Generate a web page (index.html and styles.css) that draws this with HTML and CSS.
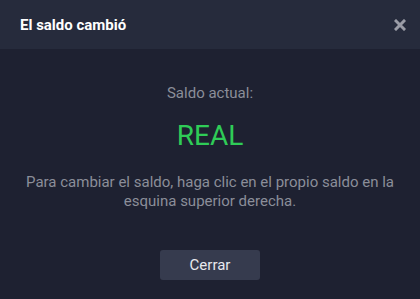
FILE: index.html
```html
<!DOCTYPE html>
<html lang="es">
<head>
<meta charset="utf-8">
<link rel="stylesheet" href="styles.css">
</head>
<body>
<div class="modal">
  <div class="header">
    <span class="title">El saldo cambió</span>
    <svg class="close" width="12" height="12" viewBox="0 0 12 12"><path d="M2 2L10 10M10 2L2 10" stroke="#9a9ca6" stroke-width="3" stroke-linecap="square"/></svg>
  </div>
  <div class="content">
    <div class="label">Saldo actual:</div>
    <div class="value">REAL</div>
    <p class="text">Para cambiar el saldo, haga clic en el propio saldo en la esquina superior derecha.</p>
    <button class="btn">Cerrar</button>
  </div>
</div>
</body>
</html>
```
FILE: styles.css
```css
html, body { margin: 0; padding: 0; }
body { width: 420px; height: 299px; background: #1e2131; font-family: Roboto, "Liberation Sans", sans-serif; overflow: hidden; }
.modal { display: flex; flex-direction: column; height: 299px; }
.header { height: 49px; background: #262b3c; display: flex; align-items: center; justify-content: space-between; padding: 0 14px 0 20px; box-sizing: border-box; }
.title { color: #ffffff; font-weight: 700; font-size: 15px; }
.close { display: block; }
.content { display: flex; flex-direction: column; align-items: center; padding-top: 35px; }
.label { color: #8b8e99; font-size: 15px; line-height: 18px; }
.value { color: #2fcc57; font-size: 28px; line-height: 34px; margin-top: 17px; }
.text { color: #8b8e99; font-size: 15px; line-height: 19px; text-align: center; margin: 20px 20px 0; }
.btn { margin-top: 39px; width: 100px; height: 30px; border: 0; border-radius: 3px; background: #363b4e; color: #e8e9ee; font-family: inherit; font-size: 15px; padding: 0; }
```
